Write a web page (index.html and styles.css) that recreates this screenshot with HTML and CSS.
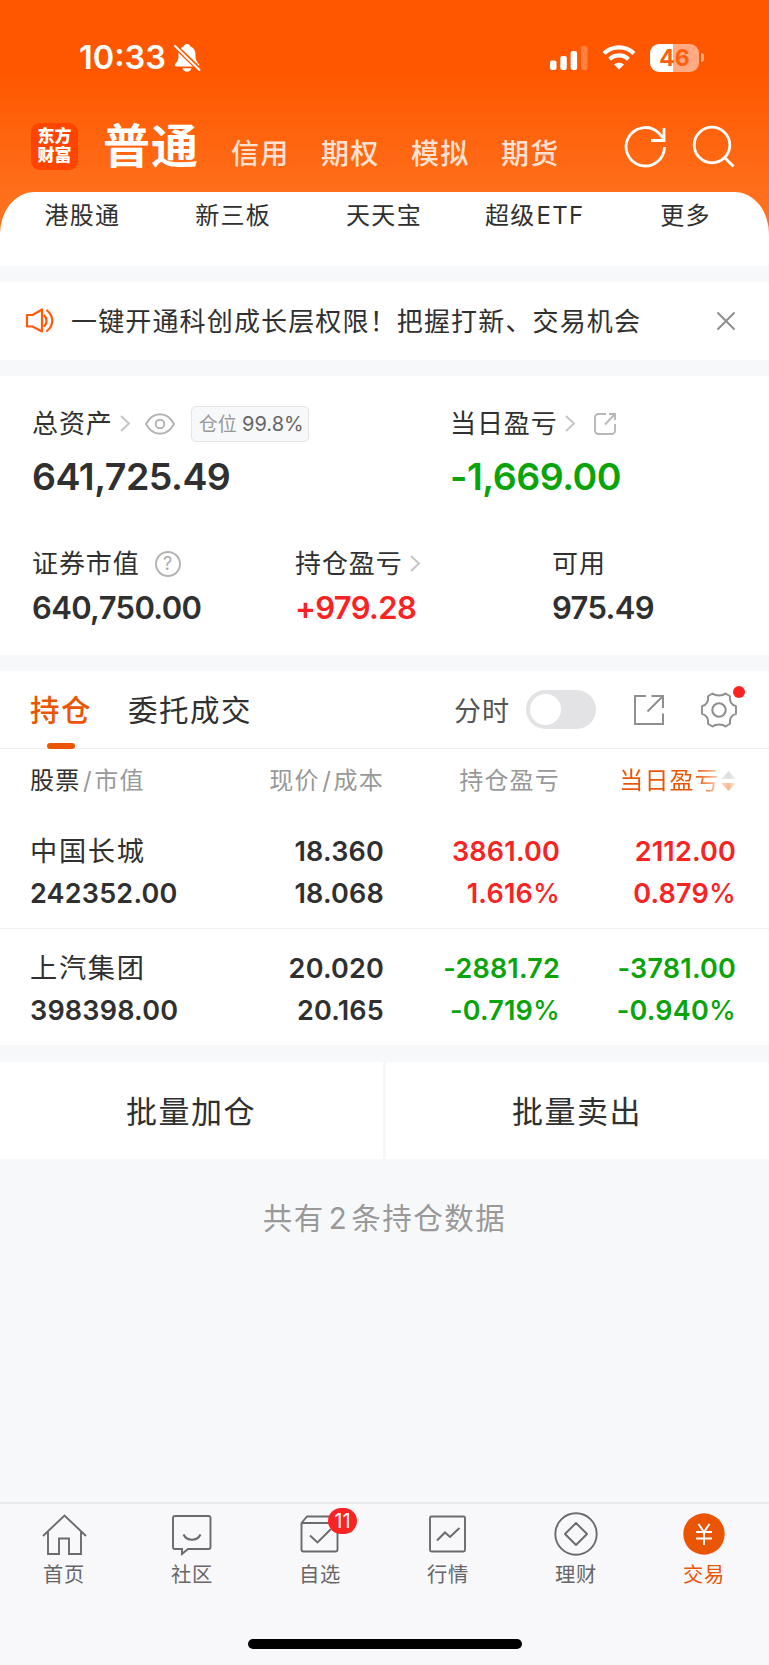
FILE: index.html
```html
<!DOCTYPE html>
<html lang="zh-CN">
<head>
    <meta charset="UTF-8">
    <meta name="viewport" content="width=device-width, initial-scale=1.0">
    <title>东方财富 - 交易</title>
    <link rel="stylesheet" href="styles.css">
</head>
<body>

<div class="app">
    <header class="header">
        <div class="status-bar">
            <span class="time">10:33</span>
            <svg class="bell" width="28" height="30" viewBox="0 0 28 30">
                <path fill="#fff" d="M14 1c1.900 0 3 1.200 3.300 2.600 3.700 1.300 5.200 4.400 5.200 8.400 0 5.500 1.300 6.500 3.500 9.300.8 1.200.2 2.200-1.200 2.200H3.200C1.800 23.500 1.200 22.500 2 21.300 4.200 18.500 5.500 17.500 5.500 12c0-4 1.500-7.100 5.200-8.400C11 2.200 12.100 1 14 1zM9.500 25.200h9c-.6 2.200-2.300 3.500-4.500 3.500s-3.900-1.300-4.500-3.500z"/>
                <path stroke="#ff5700" stroke-width="5" d="M1 2l27 26"/>
                <path stroke="#fff" stroke-width="2" stroke-linecap="round" d="M2 3l24.500 24"/>
            </svg>
            <div class="status-right">
                <svg width="38" height="24" viewBox="0 0 38 24" fill="#fff">
                    <rect x="0" y="14.500" width="6.500" height="9.500" rx="2"/>
                    <rect x="10.300" y="10" width="6.500" height="14" rx="2"/>
                    <rect x="20.600" y="5" width="6.500" height="19" rx="2"/>
                    <rect x="31" y="0" width="6.500" height="24" rx="2" opacity=".25"/>
                </svg>
                <svg class="wifi" width="34" height="25" viewBox="0 0 34 25">
                    <g fill="none" stroke="#fff" stroke-width="4.200">
                        <path d="M2 8.500C10.500.4 23.500.4 32 8.500"/>
                        <path d="M7.600 14.200c5.300-5 13.500-5 18.800 0"/>
                    </g>
                    <path fill="#fff" d="M17 24.500l-5-5c2.900-2.500 7.100-2.500 10 0z"/>
                </svg>
                <div class="battery"><span>46</span></div>
                <i class="battery-cap"></i>
            </div>
        </div>
        <div class="account-bar">
            <div class="logo">东方<br>财富</div>
            <span class="account active">普通</span>
            <span class="account">信用</span>
            <span class="account">期权</span>
            <span class="account">模拟</span>
            <span class="account">期货</span>
            <svg class="header-icons" width="112" height="44" viewBox="0 0 112 44" fill="none" stroke="#fff" stroke-width="2.800">
                <path d="M40.500 22a19.200 19.200 0 1 1-6-14.200L39 13"/>
                <path d="M40 3v12.500H27"/>
                <circle cx="88" cy="20" r="17.800"/>
                <path d="M100.500 32.500l9 9"/>
            </svg>
        </div>
        <nav class="quick-nav">
            <span>港股通</span>
            <span>新三板</span>
            <span>天天宝</span>
            <span>超级<span class="etf">ETF</span></span>
            <span>更多</span>
        </nav>
    </header>

    <section class="notice">
        <svg width="28" height="26" viewBox="0 0 28 26" fill="none" stroke="#ff5a0a" stroke-width="2.200" stroke-linejoin="round" stroke-linecap="round">
            <path d="M1 7h5.500L16 1.500v22L6.500 18.500H1z"/>
            <path d="M18.500 7.500c2.700 3 2.700 7.500 0 10.500M21 2.500c7 5.500 7 15 0 20.500"/>
        </svg>
        <p>一键开通科创成长层权限！把握打新、交易机会</p>
        <svg width="18" height="18" viewBox="0 0 18 18" stroke="#8c8c8c" stroke-width="1.900" stroke-linecap="round">
            <path d="M1 1l16 16M17 1L1 17"/>
        </svg>
    </section>

    <section class="assets">
        <div class="asset total">
            <div class="label">总资产
                <svg class="arrow" width="10" height="17" viewBox="0 0 10 17"><path d="M1 1l8 7.500L1 16"/></svg>
                <svg class="eye" width="30" height="22" viewBox="0 0 30 22" fill="none" stroke="#b3b3b3" stroke-width="1.900">
                    <path d="M1 11C8-2 22-2 29 11 22 24 8 24 1 11z"/>
                    <circle cx="15" cy="11" r="4.300"/>
                </svg>
                <span class="position">仓位 <b>99.8%</b></span>
            </div>
            <div class="value">641,725.49</div>
        </div>
        <div class="asset today">
            <div class="label">当日盈亏
                <svg class="arrow" width="10" height="17" viewBox="0 0 10 17"><path d="M1 1l8 7.500L1 16"/></svg>
                <svg class="share" width="22" height="22" viewBox="0 0 22 22" fill="none" stroke="#b8b8b8" stroke-width="1.900">
                    <path d="M12 1H4.500A3.500 3.500 0 0 0 1 4.500v13A3.500 3.500 0 0 0 4.500 21h13a3.500 3.500 0 0 0 3.500-3.500V11M15 1h6v6M21 1L11 11.500"/>
                </svg>
            </div>
            <div class="value green">-1,669.00</div>
        </div>
        <div class="asset-row">
            <div class="asset">
                <div class="label">证券市值
                    <svg class="help" width="26" height="26" viewBox="0 0 26 26">
                        <circle cx="13" cy="13" r="12" fill="none" stroke="#b3b3b3" stroke-width="1.900"/>
                        <text x="13" y="19.200" text-anchor="middle">?</text>
                    </svg>
                </div>
                <div class="value">640,750.00</div>
            </div>
            <div class="asset">
                <div class="label">持仓盈亏
                    <svg class="arrow" width="10" height="17" viewBox="0 0 10 17"><path d="M1 1l8 7.500L1 16"/></svg>
                </div>
                <div class="value red">+979.28</div>
            </div>
            <div class="asset">
                <div class="label">可用</div>
                <div class="value">975.49</div>
            </div>
        </div>
    </section>

    <section class="holdings">
        <div class="tabs">
            <span class="tab active">持仓</span>
            <span class="tab">委托成交</span>
            <span class="minute">分时</span>
            <span class="switch"></span>
            <svg class="open" width="30" height="30" viewBox="0 0 30 30" fill="none" stroke="#8f8f8f" stroke-width="2">
                <path d="M12 1H1v28h28V18.500M17.500 1H29v12M29 1L13.500 16.500"/>
            </svg>
            <span class="settings">
                <svg width="36" height="36" viewBox="0 0 36 36" fill="none" stroke="#8f8f8f" stroke-width="1.900" stroke-linejoin="round">
                    <path d="M11.500 1.500C14.500 4.200 21.500 4.200 24.500 1.500L29 4.200C28.300 9 30 12.800 35 14.200V21.800C30 23.200 28.300 27 29 31.800L24.500 34.500C21.500 31.800 14.500 31.800 11.500 34.500L7 31.800C7.700 27 6 23.200 1 21.800V14.200C6 12.800 7.700 9 7 4.200Z"/>
                    <circle cx="18" cy="18" r="6.700" stroke-width="2.100"/>
                </svg>
            </span>
        </div>

        <div class="row head">
            <span class="cell"><span class="dark">股票</span><i>/</i>市值</span>
            <span class="cell">现价<i>/</i>成本</span>
            <span class="cell">持仓盈亏</span>
            <span class="cell sort"><span class="sort-text">当日盈亏</span>
                <svg width="15" height="20" viewBox="0 0 15 20">
                    <defs>
                        <linearGradient id="up"><stop offset="0" stop-color="#eee"/><stop offset=".5" stop-color="#ddd"/><stop offset="1" stop-color="#f2f2f2"/></linearGradient>
                        <linearGradient id="down"><stop offset="0" stop-color="#fbd9c6"/><stop offset=".5" stop-color="#f9b894"/><stop offset="1" stop-color="#fdeee6"/></linearGradient>
                    </defs>
                    <path fill="url(#up)" d="M7.500 0L15 8H0z"/>
                    <path fill="url(#down)" d="M0 12h15l-7.500 8z"/>
                </svg>
            </span>
        </div>

        <div class="row">
            <div class="cell"><span class="name">中国长城</span><br>242352.00</div>
            <div class="cell">18.360<br>18.068</div>
            <div class="cell red">3861.00<br>1.616<small>%</small></div>
            <div class="cell red">2112.00<br>0.879<small>%</small></div>
        </div>
        <div class="row">
            <div class="cell"><span class="name">上汽集团</span><br>398398.00</div>
            <div class="cell">20.020<br>20.165</div>
            <div class="cell green">-2881.72<br>-0.719<small>%</small></div>
            <div class="cell green">-3781.00<br>-0.940<small>%</small></div>
        </div>
    </section>

    <div class="batch">
        <button>批量加仓</button>
        <button>批量卖出</button>
    </div>
    <p class="count">共有<span>2</span>条持仓数据</p>

    <footer class="footer">
        <nav class="tabbar">
            <a>
                <svg width="44" height="44" viewBox="0 0 44 44">
                    <path d="M1 23L22.500 2.500 44 23M6 19v22h11V25.500h10V41h12V19"/>
                </svg>
                首页
            </a>
            <a>
                <svg width="44" height="44" viewBox="0 0 44 44">
                    <path d="M5 3h33.500a2 2 0 0 1 2 2v29a2 2 0 0 1-2 2H18l-6 5v-5H5a2 2 0 0 1-2-2V5a2 2 0 0 1 2-2z"/>
                    <path stroke-width="2.200" d="M13.500 21.500c3.500 7 13.500 7 17 0"/>
                </svg>
                社区
            </a>
            <a>
                <svg width="44" height="44" viewBox="0 0 44 44">
                    <path d="M3.500 10L9 3.500h30.500V36.500a2 2 0 0 1-2 2h-32a2 2 0 0 1-2-2zM3.500 10h36M12 22.500l7.500 7L33 16"/>
                </svg>
                <em>11</em>
                自选
            </a>
            <a>
                <svg width="44" height="44" viewBox="0 0 44 44">
                    <rect x="4" y="3.500" width="35" height="35" rx="1.500"/>
                    <path stroke-width="2" d="M11 27.500l8-8 5 4.500 9.500-9"/>
                </svg>
                行情
            </a>
            <a>
                <svg width="44" height="44" viewBox="0 0 44 44">
                    <circle cx="22" cy="21" r="20.700"/>
                    <path stroke-width="1.900" stroke-linejoin="round" d="M22 10l11 11-11 11-11-11z"/>
                </svg>
                理财
            </a>
            <a class="current">
                <svg width="44" height="44" viewBox="0 0 44 44">
                    <circle class="coin" cx="22" cy="21" r="20.700"/>
                    <path class="yen" d="M16.500 11l5.500 8 5.500-8M22 19v13M14 19h16M14 25.500h16"/>
                </svg>
                交易
            </a>
        </nav>
        <div class="home-indicator"></div>
    </footer>
</div>

</body>
</html>
```

FILE: styles.css
```css
* {
    box-sizing: border-box;
}
body {
    margin: 0;
    font-family: Inter, "Noto Sans CJK SC", sans-serif;
    color: #303030;
    background-color: #f7f8fa;
}
svg {
    display: block;
    flex: none;
    overflow: visible;
}
p {
    margin: 0;
}
i, em {
    font-style: normal;
}
.app {
    width: 769px;
    height: 1665px;
    display: flex;
    flex-direction: column;
    overflow: hidden;
}
.red {
    color: #fa2323;
}
.green {
    color: #09a409;
}

/* Header */
.header {
    height: 266px;
    background: linear-gradient(#ff5700 0, #ff5700 72px, #ff701c 200px, #ff701c 240px, #fff 240px);
}
.status-bar {
    height: 115px;
    padding: 0 65px 0 79px;
    display: flex;
    align-items: center;
    color: #fff;
}
.time {
    font-size: 32.500px;
    font-weight: 600;
    line-height: 40px;
    width: 94px;
}
.status-right {
    margin-left: auto;
    display: flex;
    align-items: center;
}
.wifi {
    margin: 0 14px 0 14px;
}
.battery {
    width: 49px;
    height: 28px;
    border-radius: 9px;
    background: linear-gradient(90deg, #fff 23px, #ffaa80 23px);
    color: #ff5f0c;
    font-size: 23px;
    font-weight: 700;
    line-height: 28px;
    text-align: center;
}
.battery-cap {
    width: 3px;
    height: 9px;
    margin-left: 2px;
    border-radius: 0 3px 3px 0;
    background-color: #ffaa80;
}
.account-bar {
    height: 76.500px;
    padding-left: 31px;
    display: flex;
    align-items: flex-start;
}
.logo {
    width: 47px;
    height: 47px;
    margin-top: 8px;
    padding-top: 4px;
    border-radius: 9px;
    background-color: #ff4400;
    color: #fff;
    font-size: 17px;
    font-weight: 900;
    line-height: 19px;
    text-align: center;
}
.account {
    width: 90px;
    margin-top: 19px;
    color: #ffe2d2;
    font-size: 28px;
    font-weight: 500;
    line-height: 40px;
    letter-spacing: 1.200px;
    white-space: nowrap;
}
.account.active {
    width: 128px;
    margin: 1px 0 0 25px;
    color: #fff;
    font-size: 47px;
    font-weight: 700;
    line-height: 60px;
    letter-spacing: 1px;
}
.header-icons {
    margin: 10px 0 0 33px;
}
.quick-nav {
    height: 74.500px;
    padding: 4px 8px 0 7px;
    border-radius: 34px 34px 0 0 / 42px 42px 0 0;
    background-color: #fff;
    display: grid;
    grid-template-columns: repeat(5, 1fr);
    font-size: 24px;
    line-height: 40px;
    letter-spacing: 1.300px;
    text-align: center;
}
.etf {
    margin-left: 1px;
}

/* Notice */
.notice {
    height: 78px;
    margin: 16px 0;
    padding: 0 34px 0 26px;
    background-color: #fff;
    display: flex;
    align-items: center;
}
.notice p {
    flex: 1;
    margin-left: 17px;
    padding-top: 2px;
    font-size: 26px;
    line-height: 40px;
    letter-spacing: 1.150px;
}

/* Assets */
.assets {
    height: 279px;
    background-color: #fff;
    display: grid;
    grid-template-columns: 450px 1fr;
    grid-template-rows: 168px 1fr;
}
.asset {
    font-size: 26px;
}
.total, .today {
    padding-top: 28px;
}
.total {
    padding-left: 32px;
}
.label {
    height: 40px;
    display: flex;
    align-items: center;
    letter-spacing: .900px;
    line-height: 40px;
    white-space: nowrap;
}
.label svg {
    margin-bottom: 1px;
}
.value {
    font-size: 31px;
    font-weight: 600;
    line-height: 40px;
    letter-spacing: -.650px;
    margin-top: 4px;
}
.total .value, .today .value {
    font-size: 37.500px;
    letter-spacing: -.500px;
    margin-top: 13px;
}
.arrow {
    margin-left: 7px;
    fill: none;
    stroke: #c4c4c4;
    stroke-width: 1.900;
}
.eye {
    margin-left: 15px;
}
.position {
    width: 118px;
    height: 36px;
    margin: 0 0 0 16px;
    padding-left: 3px;
    border: 1px solid #e3e4e8;
    border-radius: 5px;
    background-color: #f7f8fa;
    color: #999;
    font-size: 19px;
    line-height: 34px;
    letter-spacing: 0;
    text-align: center;
}
.position b {
    color: #666;
    font-size: 20px;
    font-weight: 400;
}
.share {
    margin-left: 19px;
}
.asset-row {
    grid-column: 1 / 3;
    padding-left: 32px;
    display: grid;
    grid-template-columns: 263px 257px 1fr;
}
.help {
    margin-left: 15px;
}
.help text {
    fill: #aaa;
    font-size: 18px;
}

/* Holdings */
.holdings {
    margin-top: 16px;
    background-color: #fff;
}
.tabs {
    height: 78px;
    padding: 0 32px 0 30px;
    border-bottom: 1px solid #eeeff1;
    display: flex;
    align-items: center;
}
.tab {
    position: relative;
    margin-right: 36px;
    padding-top: 1px;
    font-size: 29.500px;
    line-height: 76px;
    letter-spacing: 1.500px;
}
.tab.active {
    color: #ea5504;
    font-weight: 500;
}
.tab.active::after {
    content: "";
    position: absolute;
    left: 17px;
    bottom: -1px;
    width: 28px;
    height: 6px;
    border-radius: 3px;
    background-color: #ea5504;
}
.minute {
    margin-left: auto;
    color: #555;
    font-size: 27px;
    letter-spacing: 1px;
}
.switch {
    width: 70px;
    height: 39px;
    margin-left: 16px;
    padding: 4px;
    border-radius: 20px;
    background-color: #e3e3e6;
}
.switch::before {
    content: "";
    display: block;
    width: 31px;
    height: 31px;
    border-radius: 50%;
    background-color: #fff;
}
.open {
    margin-left: 38px;
}
.settings {
    position: relative;
    margin-left: 37px;
}
.settings::after {
    content: "";
    position: absolute;
    top: -6px;
    right: -8px;
    width: 12px;
    height: 12px;
    border-radius: 50%;
    background-color: #fa2323;
}
.row {
    height: 117px;
    padding: 19px 33px 0 30px;
    border-top: 1px solid #f0f0f2;
    display: grid;
    grid-template-columns: 160px 194px 176px 176px;
    font-size: 27px;
    font-weight: 600;
    line-height: 42px;
    letter-spacing: .2px;
    text-align: right;
    white-space: nowrap;
}
.row .cell:first-child {
    text-align: left;
}
.row small {
    font-size: inherit;
    font-weight: 500;
}
.name {
    font-size: 27.200px;
    font-weight: 400;
    letter-spacing: 1.700px;
}
.head {
    height: 64px;
    padding-top: 11px;
    border: none;
    color: #999;
    font-size: 24px;
    font-weight: 400;
    letter-spacing: 1.200px;
}
.head + .row {
    height: 115px;
    padding-top: 18px;
    border: none;
}
.head i {
    margin: 0 1.500px 0 2.500px;
}
.dark {
    color: #303030;
}
.sort {
    height: 42px;
    display: flex;
    align-items: center;
    justify-content: flex-end;
}
.sort svg {
    margin-left: 1px;
}
.sort-text {
    background: linear-gradient(90deg, #ea5504 75%, #fbd3bd);
    background-clip: text;
    color: transparent;
}

/* Batch buttons */
.batch {
    margin-top: 17px;
    display: grid;
    grid-template-columns: 1fr 1fr;
    gap: 3px;
}
.batch button {
    height: 97px;
    border: none;
    padding: 0 1px 2px 0;
    background-color: #fff;
    color: #303030;
    font-family: inherit;
    font-size: 31px;
    letter-spacing: 1.500px;
}
.count {
    margin-top: 39px;
    color: #999;
    font-size: 29.500px;
    line-height: 40px;
    letter-spacing: 1.500px;
    text-align: center;
}
.count span {
    margin: 0 3px 0 4px;
}

/* Bottom bar */
.footer {
    height: 163px;
    margin-top: auto;
    border-top: 2px solid #e9eaec;
    background-color: #f8f8fb;
}
.tabbar {
    height: 134px;
    padding-top: 9px;
    display: grid;
    grid-template-columns: repeat(6, 128px);
}
.tabbar a {
    position: relative;
    display: flex;
    flex-direction: column;
    align-items: center;
    color: #666;
    font-size: 20.300px;
    line-height: 32px;
    letter-spacing: .800px;
}
.tabbar svg {
    margin-bottom: 2px;
    fill: none;
    stroke: #6b6b6b;
    stroke-width: 1.900;
}
.tabbar .current {
    color: #ea5504;
}
.tabbar .coin {
    fill: #ea5504;
    stroke: none;
}
.tabbar .yen {
    stroke: #fff;
    stroke-width: 2;
}
.tabbar em {
    position: absolute;
    top: -5px;
    left: 72px;
    width: 29px;
    height: 26px;
    border-radius: 13px;
    background-color: #fa2323;
    color: #fff;
    font-size: 20px;
    line-height: 26px;
    letter-spacing: 0;
    text-align: center;
}
.home-indicator {
    width: 274px;
    height: 10px;
    margin: 1px auto 0;
    border-radius: 5px;
    background-color: #000;
}
```
